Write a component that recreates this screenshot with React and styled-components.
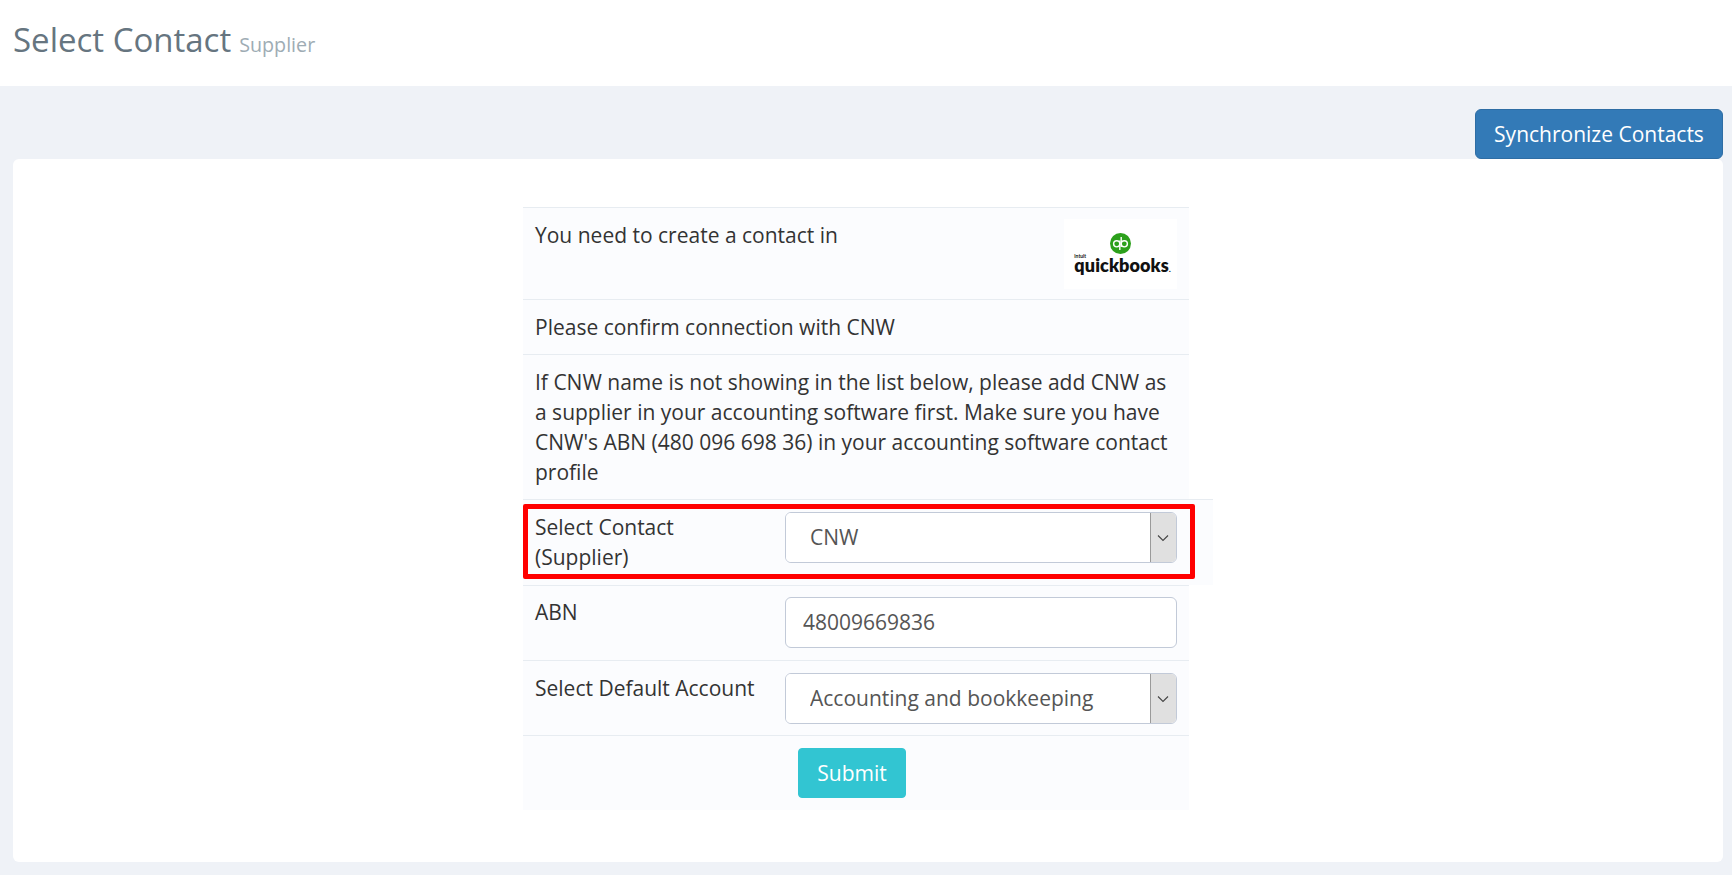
import React from 'react';
import styled, { createGlobalStyle } from 'styled-components';

const GlobalStyle = createGlobalStyle`
    html, body {
        margin: 0;
        padding: 0;
        background: #eff2f7;
        font-family: "Open Sans", "Liberation Sans", sans-serif;
        color: #333;
    }
`;

const Header = styled.header`
    height: 86px;
    background: #fff;
    padding: 17px 13px 0;
    display: flex;
    align-items: baseline;
    gap: 8px;
    box-sizing: border-box;
`;

const Title = styled.h1`
    margin: 0;
    font-size: 33px;
    line-height: 46px;
    font-weight: 400;
    color: #667580;
`;

const Subtitle = styled.small`
    font-size: 19.7px;
    color: #9eacb4;
`;

const Toolbar = styled.div`
    display: flex;
    justify-content: flex-end;
    padding: 23px 9px 0 13px;
`;

const SyncButton = styled.button`
    height: 50px;
    width: 248px;
    padding: 0;
    border: 1px solid #2e6da4;
    border-radius: 6px;
    background: #337ab7;
    color: #fff;
    font: 400 21px "Open Sans", sans-serif;
`;

const Card = styled.main`
    margin: 0 9px 13px 13px;
    height: 703px;
    box-sizing: border-box;
    padding-top: 48px;
    padding-left: 510px;
    background: #fff;
    border-radius: 6px;
`;

const Table = styled.div`
    position: relative;
    display: flex;
    flex-direction: column;
    width: 690px;
`;

const Row = styled.div`
    width: ${({ $wide }) => ($wide ? '690px' : '666px')};
    height: ${({ $height }) => $height}px;
    box-sizing: border-box;
    border-top: 1px solid #e7ecf1;
    background: #fbfcfe;
    padding: 12px 12px 0;
    font-size: 21px;
    line-height: 30px;
    color: #333;
    display: ${({ $grid }) => ($grid ? 'grid' : 'block')};
    grid-template-columns: 250px 392px;
`;

const IntroRow = styled(Row)`
    display: flex;
    justify-content: space-between;
`;

const Label = styled.div`
    padding-right: 20px;
    margin-top: ${({ $raised }) => ($raised ? '-1px' : '0')};
`;

const Logo = styled.div`
    width: 113px;
    height: 70px;
    margin-top: -1px;
    background: #fff;
    display: flex;
    flex-direction: column;
    align-items: center;
    padding-top: 14px;
    box-sizing: border-box;
`;

const LogoText = styled.div`
    display: flex;
    flex-direction: column;
    margin-left: 4px;
    color: #111;
`;

const LogoIntuit = styled.span`
    font: 700 5px/5px "Lato", sans-serif;
`;

const LogoWord = styled.span`
    font: 800 18px/12px "Lato", sans-serif;
    letter-spacing: 0.1px;
`;

const LogoDot = styled.span`
    font-size: 7px;
`;

const SelectBox = styled.div`
    display: flex;
    width: 392px;
    height: 51px;
    box-sizing: border-box;
    border: 1px solid #c2cad8;
    border-radius: 6px;
    overflow: hidden;
    background: #fff;
`;

const Select = styled.select`
    flex: 1;
    min-width: 0;
    appearance: none;
    border: 0;
    outline: 0;
    background: #fff;
    padding: 0 0 2px 24px;
    font: 400 21px "Open Sans", sans-serif;
    color: #555;
`;

const Arrow = styled.span`
    width: 26px;
    box-sizing: border-box;
    padding-right: 1px;
    display: flex;
    align-items: center;
    justify-content: center;
    background: #e0e0e0;
    border-left: 1px solid #9a9a9a;
`;

const Input = styled.input`
    width: 392px;
    height: 51px;
    margin-top: -1px;
    box-sizing: border-box;
    border: 1px solid #c2cad8;
    border-radius: 6px;
    outline: 0;
    padding: 0 17px 2px;
    font: 400 21px "Open Sans", sans-serif;
    color: #555;
`;

const SubmitRow = styled(Row)`
    padding: 12px 0 0 275px;
`;

const SubmitButton = styled.button`
    width: 108px;
    height: 50px;
    border: 1px solid #32c5d2;
    border-radius: 4px;
    background: #32c5d2;
    color: #fff;
    font: 400 21px "Open Sans", sans-serif;
`;

const Highlight = styled.div`
    position: absolute;
    left: 0;
    top: 297px;
    width: 672px;
    height: 75px;
    box-sizing: border-box;
    border: 5px solid #ff0000;
    border-radius: 2px;
    pointer-events: none;
`;

const Chevron = () => (
    <svg width="12" height="8" viewBox="0 0 12 8">
        <path d="M1 1.5 L6 6.5 L11 1.5" fill="none" stroke="#444" strokeWidth="1.1" />
    </svg>
);

const QuickbooksLogo = () => (
    <Logo>
        <svg width="21" height="21" viewBox="0 0 21 21">
            <circle cx="10.5" cy="10.5" r="10.5" fill="#2ca01c" />
            <circle cx="6.7" cy="10.8" r="3.1" fill="none" stroke="#fff" strokeWidth="1.4" />
            <path d="M9.8 7.5V17" fill="none" stroke="#fff" strokeWidth="1.4" />
            <circle cx="14.3" cy="10.8" r="3.1" fill="none" stroke="#fff" strokeWidth="1.4" />
            <path d="M11.2 4V14" fill="none" stroke="#fff" strokeWidth="1.4" />
        </svg>
        <LogoText>
            <LogoIntuit>intuit</LogoIntuit>
            <LogoWord>quickbooks<LogoDot>.</LogoDot></LogoWord>
        </LogoText>
    </Logo>
);

const App = () => (
    <>
        <GlobalStyle />
        <Header>
            <Title>Select Contact</Title>
            <Subtitle>Supplier</Subtitle>
        </Header>
        <Toolbar>
            <SyncButton>Synchronize Contacts</SyncButton>
        </Toolbar>
        <Card>
            <Table>
                <IntroRow $height={92}>
                    You need to create a contact in
                    <QuickbooksLogo />
                </IntroRow>
                <Row $height={55}>Please confirm connection with CNW</Row>
                <Row $height={145}>
                    If CNW name is not showing in the list below, please add CNW as a supplier in your
                    accounting software first. Make sure you have CNW's ABN (480 096 698 36) in your
                    accounting software contact profile
                </Row>
                <Row $height={86} $grid $wide>
                    <Label>Select Contact (Supplier)</Label>
                    <SelectBox>
                        <Select defaultValue="CNW">
                            <option>CNW</option>
                        </Select>
                        <Arrow><Chevron /></Arrow>
                    </SelectBox>
                </Row>
                <Row $height={75} $grid>
                    <Label $raised>ABN</Label>
                    <Input defaultValue="48009669836" />
                </Row>
                <Row $height={75} $grid>
                    <Label>Select Default Account</Label>
                    <SelectBox>
                        <Select defaultValue="Accounting and bookkeeping">
                            <option>Accounting and bookkeeping</option>
                        </Select>
                        <Arrow><Chevron /></Arrow>
                    </SelectBox>
                </Row>
                <SubmitRow $height={75}>
                    <SubmitButton>Submit</SubmitButton>
                </SubmitRow>
                <Highlight />
            </Table>
        </Card>
    </>
);

export default App;
